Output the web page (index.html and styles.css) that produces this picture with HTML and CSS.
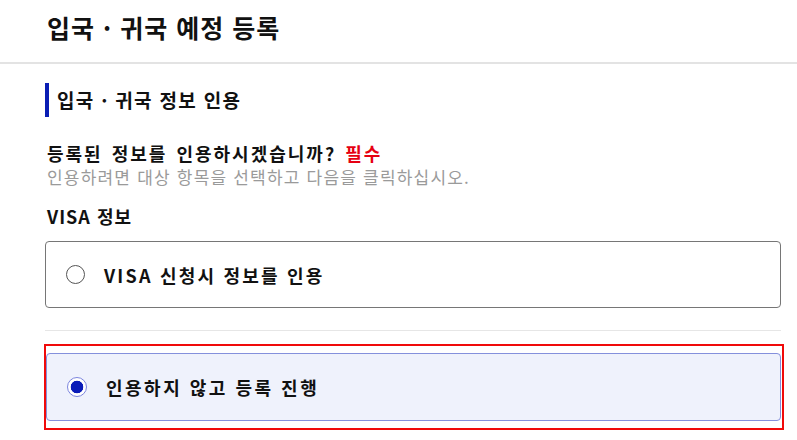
FILE: index.html
```html
<!DOCTYPE html>
<html lang="ko">
<head>
<meta charset="utf-8">
<link rel="stylesheet" href="styles.css">
</head>
<body>
<header class="page-header">
  <h1 class="page-title">입국 · 귀국 예정 등록</h1>
</header>
<main class="content">
  <h2 class="section-title">입국 · 귀국 정보 인용</h2>
  <p class="question">등록된 정보를 인용하시겠습니까? <span class="required">필수</span></p>
  <p class="hint">인용하려면 대상 항목을 선택하고 다음을 클릭하십시오.</p>
  <h3 class="group-label">VISA 정보</h3>
  <label class="option">
    <span class="radio"></span>
    <span class="option-text">VISA 신청시 정보를 인용</span>
  </label>
  <hr class="divider">
  <div class="highlight">
    <label class="option option-selected">
      <span class="radio radio-checked"></span>
      <span class="option-text option-text-wide">인용하지 않고 등록 진행</span>
    </label>
  </div>
</main>
</body>
</html>
```
FILE: styles.css
```css
* { box-sizing: border-box; }
html, body { margin: 0; padding: 0; background: #fff; }
body {
  font-family: "Noto Sans CJK KR", "Noto Sans", sans-serif;
  color: #111;
  width: 797px;
  height: 440px;
  overflow: hidden;
}
.page-header {
  height: 64px;
  border-bottom: 2px solid #e3e3e3;
  padding-left: 47px;
  display: flex;
  align-items: center;
}
.page-title {
  margin: 0;
  font-size: 25px;
  font-weight: 700;
  letter-spacing: 1px;
  line-height: 1;
  padding-bottom: 7px;
}
.content {
  padding: 0 16px 0 45px;
}
.section-title {
  margin: 19px 0 0;
  height: 34px;
  border-left: 4px solid #0a1eb4;
  padding-left: 8px;
  font-size: 19px;
  font-weight: 700;
  line-height: 34px;
  letter-spacing: 1.3px;
}
.question {
  margin: 24px 0 0 2px;
  font-size: 18px;
  font-weight: 700;
  line-height: 24px;
  letter-spacing: 2px;
  word-spacing: 2px;
}
.required { color: #e60012; }
.hint {
  margin: 0 0 0 2px;
  font-size: 17px;
  color: #9a9a9a;
  line-height: 24px;
  letter-spacing: 1.2px;
}
.group-label {
  margin: 15px 0 0 2px;
  font-size: 18px;
  font-weight: 700;
  line-height: 24px;
  letter-spacing: 1px;
}
.option {
  margin-top: 13px;
  height: 67px;
  border: 1px solid #767676;
  border-radius: 4px;
  display: flex;
  align-items: center;
  padding-left: 20px;
  gap: 19px;
  background: #fff;
}
.option-text {
  font-size: 18px;
  font-weight: 700;
  letter-spacing: 2.2px;
}
.option-text-wide { letter-spacing: 2.5px; }
.radio {
  width: 19px;
  height: 19px;
  border-radius: 50%;
  border: 1px solid #555;
  background: #fff;
  flex: none;
}
.radio-checked {
  width: 20px;
  height: 20px;
  border: 1.5px solid #7d86de;
  background: radial-gradient(circle, #0a1cb8 0 6px, #fff 6.6px);
}
.divider {
  margin: 22px 0 0;
  border: 0;
  border-top: 1px solid #e6e6e6;
}
.highlight {
  margin: 13px -3px 0 -1px;
  border: 2px solid #f00a0a;
  padding: 7px 1px 7px 0;
}
.option-selected {
  margin-top: 0;
  height: 68px;
  border-color: #8490dc;
  background: #eff2fc;
}
```
